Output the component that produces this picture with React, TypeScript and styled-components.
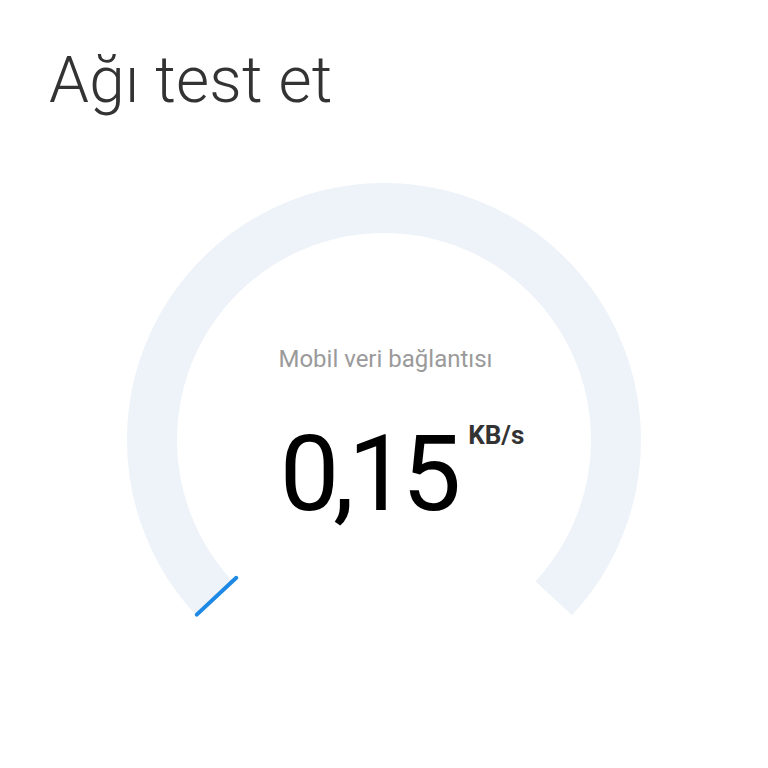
import React from "react";
import styled, { createGlobalStyle } from "styled-components";

const GlobalStyle = createGlobalStyle`
  html, body {
    margin: 0;
    padding: 0;
    background: #ffffff;
  }
  body {
    font-family: Roboto, "Noto Sans", "Liberation Sans", sans-serif;
  }
`;

const Screen = styled.div`
  width: 768px;
  height: 768px;
  display: flex;
  flex-direction: column;
  background: #ffffff;
  overflow: hidden;
`;

const Title = styled.h1`
  margin: 49px 0 0 49px;
  font-size: 64px;
  line-height: 64px;
  font-weight: 300;
  color: #333333;
  letter-spacing: 0.2px;
`;

const GaugeArea = styled.div`
  margin-top: 67px;
  display: grid;
  justify-content: center;
  justify-items: center;
`;

const GaugeSvg = styled.svg`
  grid-area: 1 / 1;
  width: 520px;
  height: 520px;
`;

const Readout = styled.div`
  grid-area: 1 / 1;
  display: flex;
  flex-direction: column;
  align-items: center;
  padding-top: 167px;
`;

const Label = styled.div`
  font-size: 24px;
  line-height: 24px;
  color: #9a9a9a;
  margin-left: 3px;
`;

const ValueRow = styled.div`
  display: flex;
  align-items: flex-start;
  margin-top: 50px;
  padding-left: 36px;
`;

const Value = styled.div`
  font-size: 106px;
  line-height: 106px;
  font-weight: 400;
  color: #000000;
  letter-spacing: -6px;
`;

const Unit = styled.div`
  font-size: 26px;
  line-height: 26px;
  font-weight: 700;
  color: #333333;
  margin: 1px 0 0 13px;
`;

const C = 260;
const R = 232;
const START = -133;
const END = 133;

function polar(deg: number, r: number) {
  const a = ((deg - 90) * Math.PI) / 180;
  return { x: C + r * Math.cos(a), y: C + r * Math.sin(a) };
}

function arc(from: number, to: number, r: number) {
  const s = polar(from, r);
  const e = polar(to, r);
  const large = to - from > 180 ? 1 : 0;
  return `M ${s.x} ${s.y} A ${r} ${r} 0 ${large} 1 ${e.x} ${e.y}`;
}

const Gauge: React.FC<{ progress: number }> = ({ progress }) => {
  const angle = START + (END - START) * progress;
  const inner = polar(angle, R - 30);
  const outer = polar(angle, R + 24);
  return (
    <GaugeSvg viewBox="0 0 520 520">
      <path d={arc(START, END, R)} fill="none" stroke="#edf3f9" strokeWidth={50} />
      <line
        x1={inner.x}
        y1={inner.y}
        x2={outer.x}
        y2={outer.y}
        stroke="#1e88e5"
        strokeWidth={4}
        strokeLinecap="round"
      />
    </GaugeSvg>
  );
};

export default function App() {
  return (
    <>
      <GlobalStyle />
      <Screen>
        <Title>Ağı test et</Title>
        <GaugeArea>
          <Gauge progress={0} />
          <Readout>
            <Label>Mobil veri bağlantısı</Label>
            <ValueRow>
              <Value>0,15</Value>
              <Unit>KB/s</Unit>
            </ValueRow>
          </Readout>
        </GaugeArea>
      </Screen>
    </>
  );
}
